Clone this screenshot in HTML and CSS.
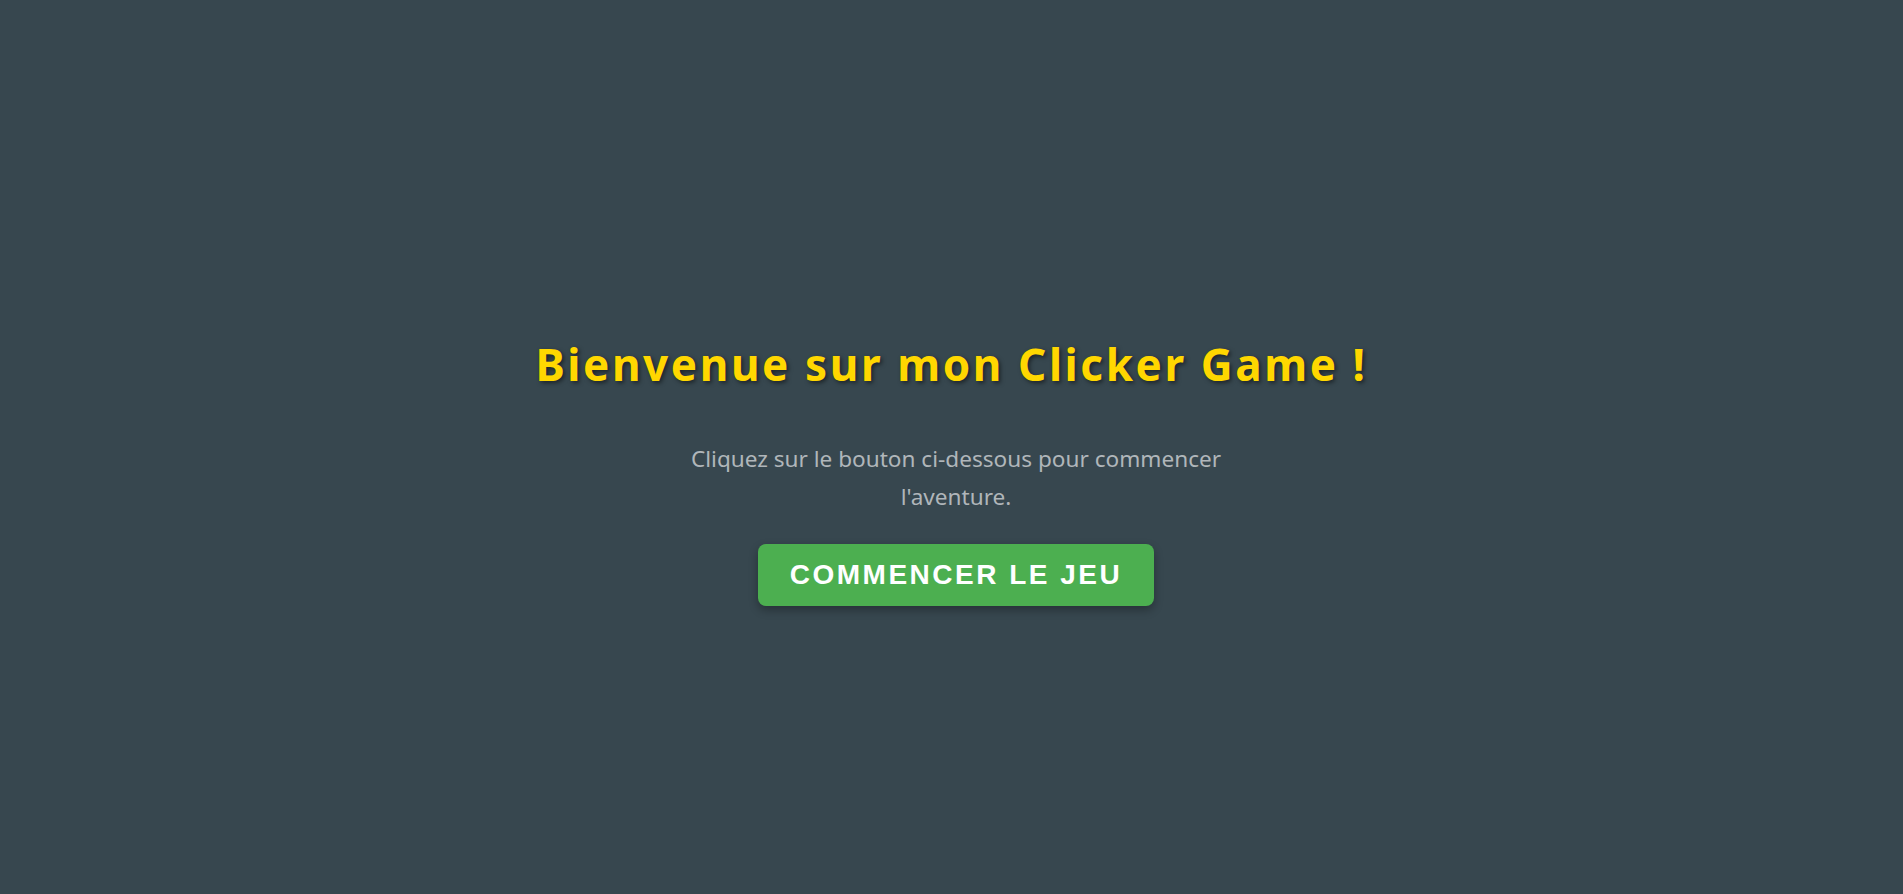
FILE: index.html
```html
<!DOCTYPE html>
<html lang="fr">
<head>
<meta charset="utf-8">
<title>Clicker Game</title>
<link rel="stylesheet" href="styles.css">
</head>
<body>
<main class="welcome">
  <h1 class="welcome-title">Bienvenue sur mon Clicker Game !</h1>
  <p class="welcome-text">Cliquez sur le bouton ci-dessous pour commencer l'aventure.</p>
  <button class="start-btn" type="button">Commencer le jeu</button>
</main>
</body>
</html>
```
FILE: styles.css
```css
html, body {
  margin: 0;
  padding: 0;
  height: 100%;
}
body {
  background: #37474f;
  font-family: "Noto Sans", "Open Sans", sans-serif;
  display: flex;
  align-items: center;
  justify-content: center;
}
.welcome {
  display: flex;
  flex-direction: column;
  align-items: center;
  text-align: center;
}
.welcome-title {
  margin: 46px 0 46px;
  font-size: 44px;
  font-weight: 700;
  letter-spacing: 2.6px;
  color: #ffd700;
  text-shadow: 2px 2px 4px rgba(0, 0, 0, 0.5);
}
.welcome-text {
  margin: 0 0 28px 9px;
  max-width: 600px;
  font-size: 22.6px;
  line-height: 1.67;
  color: #b0b6ba;
}
.start-btn {
  margin-left: 9px;
  font-family: "Liberation Sans", Arial, sans-serif;
  font-size: 28px;
  font-weight: 700;
  letter-spacing: 2.5px;
  text-transform: uppercase;
  color: #fff;
  background: #4caf50;
  border: none;
  border-radius: 8px;
  padding: 15px 32px;
  box-shadow: 0 4px 10px rgba(0, 0, 0, 0.3);
  cursor: pointer;
}
```
